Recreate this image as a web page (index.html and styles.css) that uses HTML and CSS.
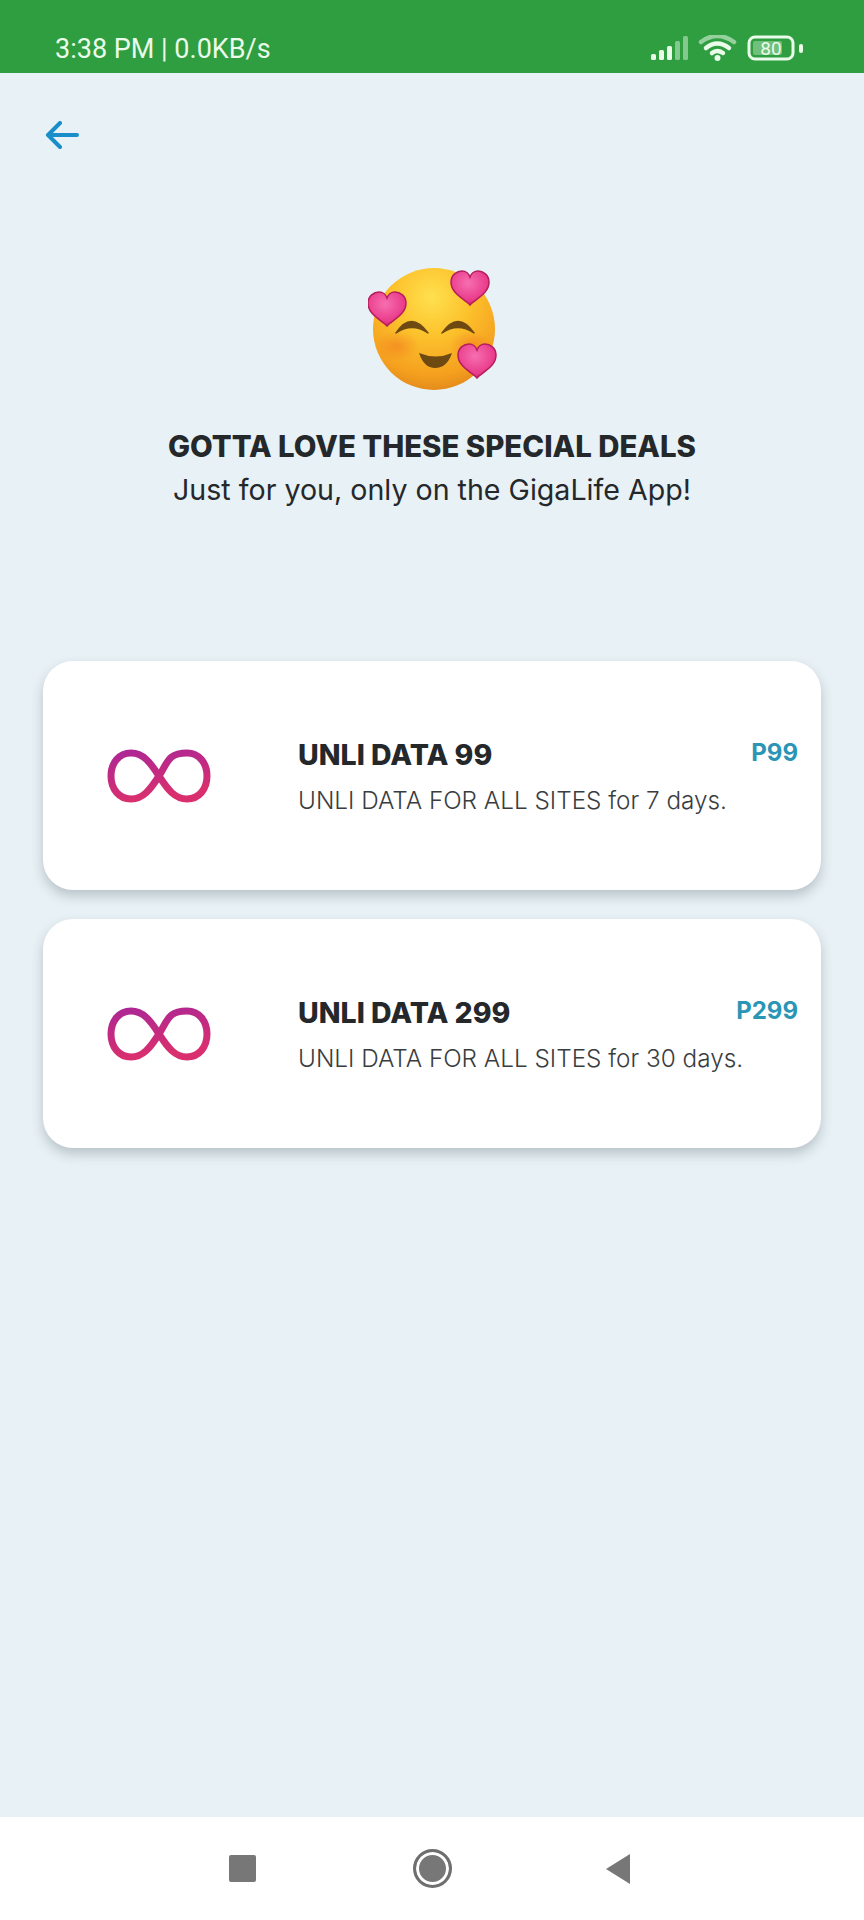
FILE: index.html
```html
<!DOCTYPE html>
<html lang="en">
<head>
    <meta charset="UTF-8">
    <meta name="viewport" content="width=device-width, initial-scale=1.0">
    <title>Special Deals</title>
    <link rel="stylesheet" href="styles.css">
</head>
<body>
    <div class="phone">

        <!-- Status bar -->
        <div class="status-bar">
            <span class="status-text">3:38 PM | 0.0KB/s</span>
            <svg class="status-icons" width="153" height="26" viewBox="0 0 153 26">
                <g fill="#eafbe9">
                    <rect x="0" y="19" width="5" height="6" rx="1.5"/>
                    <rect x="8" y="15" width="5" height="10" rx="1.5"/>
                    <rect x="16" y="11" width="5" height="14" rx="1.5"/>
                </g>
                <g fill="#eafbe9" opacity="0.45">
                    <rect x="24" y="6" width="5" height="19" rx="1.5"/>
                    <rect x="32" y="1" width="5" height="24" rx="1.5"/>
                </g>
                <g fill="none" stroke="#eafbe9" stroke-width="4.500" stroke-linecap="round">
                    <path d="M50 7 Q66 -5 83 7" opacity="0.55"/>
                    <path d="M55 13 Q66 4 78 13"/>
                    <path d="M61 18 Q66 14 72 18"/>
                </g>
                <circle cx="66.500" cy="23" r="3" fill="#eafbe9"/>
                <rect x="98" y="2" width="44" height="22" rx="6" fill="none" stroke="#eafbe9" stroke-width="3"/>
                <rect x="102" y="6" width="29" height="14" rx="2" fill="#eafbe9" opacity="0.35"/>
                <text class="battery-num" x="120" y="19.500" text-anchor="middle">80</text>
                <rect x="148" y="9" width="4" height="9" rx="2" fill="#eafbe9"/>
            </svg>
        </div>

        <div class="content">

            <button class="back-button" aria-label="Back">
                <svg width="34" height="28" viewBox="0 0 34 28">
                    <path d="M32 14H4M15 2 3 14l12 12" fill="none" stroke="#1a8ec9" stroke-width="4" stroke-linecap="round" stroke-linejoin="round"/>
                </svg>
            </button>

            <!-- Heading -->
            <div class="hero">
                <svg class="hero-emoji" width="130" height="124" viewBox="0 0 130 124">
                    <defs>
                        <radialGradient id="faceFill" cx="48%" cy="24%" r="80%">
                            <stop offset="0" stop-color="#ffe04f"/>
                            <stop offset="0.4" stop-color="#fcc22c"/>
                            <stop offset="0.8" stop-color="#f5a01f"/>
                            <stop offset="1" stop-color="#df851a"/>
                        </radialGradient>
                        <radialGradient id="cheekFill">
                            <stop offset="0" stop-color="#f0641e" stop-opacity="0.4"/>
                            <stop offset="1" stop-color="#f0641e" stop-opacity="0"/>
                        </radialGradient>
                        <radialGradient id="heartFill" cx="45%" cy="35%" r="70%">
                            <stop offset="0" stop-color="#f66fb0"/>
                            <stop offset="0.75" stop-color="#e93a8a"/>
                            <stop offset="1" stop-color="#c2185f"/>
                        </radialGradient>
                        <path id="heart" d="M0 17C-5 11-19 6-19-6-19-13-13-17-8-17-4-17-1-14 0-11 1-14 4-17 8-17 13-17 19-13 19-6 19 6 5 11 0 17Z"/>
                    </defs>
                    <circle cx="66" cy="61" r="61" fill="url(#faceFill)"/>
                    <ellipse cx="29" cy="78" rx="22" ry="15" fill="url(#cheekFill)"/>
                    <ellipse cx="103" cy="78" rx="22" ry="15" fill="url(#cheekFill)"/>
                    <g fill="#6e4a12" stroke="#6e4a12" stroke-width="1.500" stroke-linejoin="round">
                        <path d="M28 65Q43 42 60 65 44 54 28 65Z"/>
                        <path d="M74 65Q90 42 106 65 90 54 74 65Z"/>
                    </g>
                    <path d="M51 85Q68 92 84 85 79 100 67 100 56 100 51 85Z" fill="#6e4a12"/>
                    <use href="#heart" x="19" y="41" fill="url(#heartFill)" stroke="#b51d5c" stroke-width="1.500"/>
                    <use href="#heart" x="102" y="20" fill="url(#heartFill)" stroke="#b51d5c" stroke-width="1.500"/>
                    <use href="#heart" x="109" y="93" fill="url(#heartFill)" stroke="#b51d5c" stroke-width="1.500"/>
                </svg>
                <h1>GOTTA LOVE THESE SPECIAL DEALS</h1>
                <p>Just for you, only on the GigaLife App!</p>
            </div>

            <!-- Deals -->
            <div class="deal-list">
                <div class="deal-card">
                    <div class="deal-icon">
                        <svg width="104" height="54" viewBox="0 0 104 54">
                            <defs>
                                <linearGradient id="infFill" x1="0" y1="0" x2="0.3" y2="1">
                                    <stop offset="0" stop-color="#ad2794"/>
                                    <stop offset="1" stop-color="#d92f6e"/>
                                </linearGradient>
                                <path id="infinity" d="M52 27C43 13 36 4 24 4 12 4 4 14 4 27S12 50 24 50C36 50 43 41 52 27S61 4 80 4C92 4 100 14 100 27S92 50 80 50C68 50 61 41 52 27Z" fill="none" stroke="url(#infFill)" stroke-width="7"/>
                            </defs>
                            <use href="#infinity"/>
                        </svg>
                    </div>
                    <div class="deal-info">
                        <div class="deal-title">UNLI DATA 99</div>
                        <div class="deal-desc">UNLI DATA FOR ALL SITES for 7 days.</div>
                    </div>
                    <div class="deal-price">P99</div>
                </div>
                <div class="deal-card">
                    <div class="deal-icon">
                        <svg width="104" height="54" viewBox="0 0 104 54">
                            <use href="#infinity"/>
                        </svg>
                    </div>
                    <div class="deal-info">
                        <div class="deal-title">UNLI DATA 299</div>
                        <div class="deal-desc">UNLI DATA FOR ALL SITES for 30 days.</div>
                    </div>
                    <div class="deal-price">P299</div>
                </div>
            </div>

        </div>

        <!-- Android nav bar -->
        <div class="nav-bar">
            <span class="nav-square"></span>
            <span class="nav-circle"></span>
            <svg width="26" height="30" viewBox="0 0 26 30">
                <path d="M1 15 25 0V30Z" fill="#777"/>
            </svg>
        </div>

    </div>
</body>
</html>
```

FILE: styles.css
```css
/* Special deals screen */

* {
    box-sizing: border-box;
}

body {
    margin: 0;
    background-color: #e8f1f5;
    font-family: 'Inter', 'Liberation Sans', sans-serif;
    color: #25282b;
}

.phone {
    display: flex;
    flex-direction: column;
    height: 1920px;
}

.status-bar {
    height: 73px;
    flex-shrink: 0;
    display: flex;
    justify-content: space-between;
    align-items: flex-start;
    padding: 35px 60px 0 55px;
    background-color: #2f9e41;
}

.status-text {
    font-family: 'Roboto', sans-serif;
    font-size: 27px;
    line-height: 28px;
    color: #eafbe9;
}

.status-icons {
    margin-top: 0;
}

.battery-num {
    font-family: 'Roboto', sans-serif;
    font-size: 19px;
    fill: #eafbe9;
}

.content {
    flex: 1;
    display: flex;
    flex-direction: column;
    padding: 0 43px;
}

.back-button {
    align-self: flex-start;
    margin: 48px 0 0 2px;
    padding: 0;
    border: none;
    background: none;
    line-height: 0;
}

.hero {
    display: flex;
    flex-direction: column;
    align-items: center;
    margin-top: 119px;
    text-align: center;
}

.hero-emoji {
    margin-left: 2px;
}

.hero h1 {
    margin: 35px 0 0 0;
    font-size: 29.400px;
    line-height: 40px;
    font-weight: 800;
    white-space: nowrap;
}

.hero p {
    margin: 4px 0 0 0;
    font-size: 28.600px;
    line-height: 38px;
    font-weight: 400;
}

.deal-list {
    display: flex;
    flex-direction: column;
    gap: 29px;
    margin-top: 152px;
}

.deal-card {
    height: 229px;
    display: flex;
    align-items: flex-start;
    padding: 77px 23px 0 0;
    background-color: #fff;
    border-radius: 30px;
    box-shadow: 0 6px 12px rgba(60, 80, 90, 0.28);
}

.deal-icon {
    width: 255px;
    flex-shrink: 0;
    padding: 11px 0 0 64px;
    line-height: 0;
}

.deal-info {
    flex: 1;
    min-width: 0;
}

.deal-title {
    font-size: 28.500px;
    line-height: 34px;
    font-weight: 800;
    white-space: nowrap;
}

.deal-desc {
    margin-top: 11px;
    font-size: 24.300px;
    line-height: 34px;
    font-weight: 300;
    color: #3a3d40;
    white-space: nowrap;
}

.deal-price {
    flex-shrink: 0;
    font-size: 24px;
    line-height: 30px;
    font-weight: 700;
    color: #2a95b5;
}

.nav-bar {
    height: 103px;
    flex-shrink: 0;
    display: flex;
    align-items: center;
    justify-content: space-between;
    padding: 0 233px 0 229px;
    background-color: #fff;
}

.nav-square {
    width: 27px;
    height: 27px;
    border-radius: 2px;
    background-color: #777;
}

.nav-circle {
    width: 39px;
    height: 39px;
    margin-left: 3px;
    border-radius: 50%;
    border: 3px solid #6f6f6f;
    background-color: #777;
    box-shadow: inset 0 0 0 3px #fff;
}
```
